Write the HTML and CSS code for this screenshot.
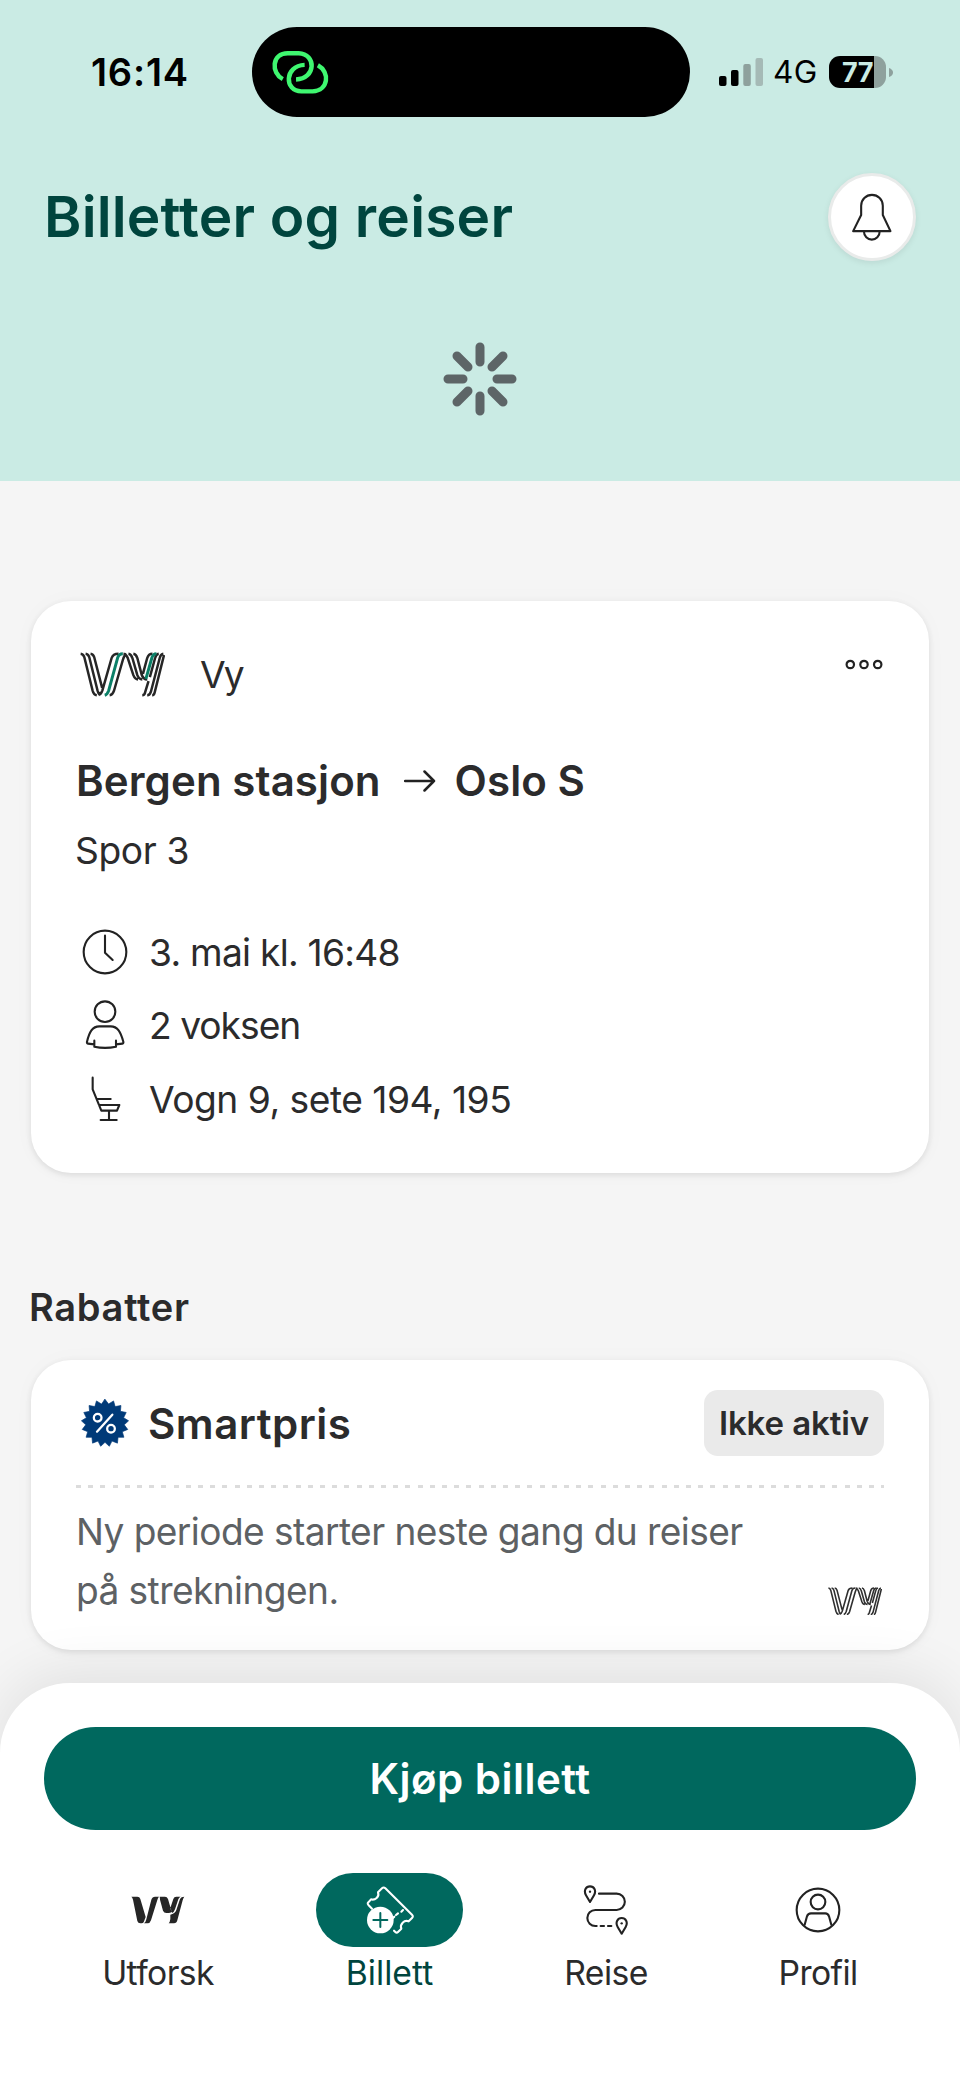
FILE: index.html
```html
<!DOCTYPE html>
<html lang="nb">
<head>
<meta charset="utf-8">
<title>Billetter og reiser</title>
<link rel="stylesheet" href="styles.css">
</head>
<body>
<div class="screen">
  <header class="header">
    <div class="status">
      <span class="time">16:14</span>
      <div class="island">
        <svg class="link-icon" viewBox="90 86 180 142"><path d="M128 177 C92 158 94 99 143 99 H176 C230 101 229 176 168 178"/><path d="M194 134 C132 136 132 214 184 214 H218 C267 212 271 155 234 135"/></svg>
      </div>
      <div class="indicators">
        <svg class="signal" viewBox="0 0 44 28"><rect x="0" y="18" width="7.5" height="10" rx="2"/><rect x="12" y="12" width="7.5" height="16" rx="2"/><rect x="24.3" y="6" width="7.5" height="22" rx="2" fill="#8ea19d"/><rect x="36.5" y="0" width="7.5" height="28" rx="2" fill="#a5bab6"/></svg>
        <span class="network">4G</span>
        <div class="battery">77</div>
        <svg class="battery-tip" viewBox="0 0 4 9"><path d="M0 0 Q4 1.5 4 4.5 Q4 7.5 0 9Z"/></svg>
      </div>
    </div>
    <div class="title-row">
      <h1 class="title">Billetter og reiser</h1>
      <button class="bell" aria-label="Varsler"><svg viewBox="484 486 124 150"><path d="M490.500 603.500 L514.500 555 V527 a32.500 32.500 0 0 1 65 0 V555 L602.500 603.500 Z M523 605 a23.500 24 0 0 0 47 0"/></svg></button>
    </div>
    <svg class="spinner" viewBox="-37 -37 74 74"><path d="M0 -17V-32 M0 17V32 M-17 0H-32 M17 0H32 M12 -12L23 -23 M12 12L23 23 M-12 12L-23 23 M-12 -12L-23 -23"/></svg>
  </header>

  <main class="content">
    <article class="card trip">
      <div class="operator">
        <svg class="vy-logo" viewBox="60 64 258 136">
          <g id="vy-lines"><path d="M62 69 Q70 70 73 79 L98 180 Q102 194 111 195 M77 69 Q85 70 88 79 L113 180 Q116 191 121 195 M92 69 Q100 70 103 79 L127 172 M117 193 Q124 192 128 180 L156 82 Q160 69 177 69 M150 195 Q159 194 163 182 L190 88 Q194 73 201 69 M192 69 Q200 70 205 82 L222 134 Q227 147 236 147 M207 69 Q215 70 219 82 L234 134 Q239 147 249 147 M222 69 Q230 70 234 82 L247 132 Q252 147 264 147 M251 130 L264 82 Q268 69 280 69 M299 69 Q291 70 288 82 L272 140 M268 152 L258 185 Q256 195 249 195 M313 69 Q305 70 302 82 L275 185 Q272 195 264 195 M315 73 L287 185 Q285 195 279 195"/></g>
          <path class="vy-green" d="M135 195 Q143 193 147 181 L174 82 Q178 69 190 69 M260 145 L278 82 Q282 69 292 69"/>
        </svg>
        <span class="operator-name">Vy</span>
        <svg class="more" viewBox="0 0 38 11"><circle cx="5.300" cy="5.500" r="3.700"/><circle cx="19" cy="5.500" r="3.700"/><circle cx="32.700" cy="5.500" r="3.700"/></svg>
      </div>
      <h2 class="route"><span>Bergen stasjon</span><svg class="arrow" viewBox="0 0 32 24"><path d="M1 12H30 M20.500 2.500 L30 12 L20.500 21.500"/></svg><span>Oslo S</span></h2>
      <p class="track">Spor 3</p>
      <ul class="details">
        <li><svg class="detail-icon" viewBox="60 52 150 150"><circle cx="135" cy="127" r="64"/><path d="M135 78 V129 L158 151"/></svg><span>3. mai kl. 16:48</span></li>
        <li><svg class="detail-icon" viewBox="60 272 150 150"><circle cx="135" cy="307" r="31"/><path d="M103 394 V412 Q135 419 168 412 V394 M103 405 L84 403 Q80 402 81 397 C88 368 97 351 118 351 H152 C173 351 182 368 190 397 Q191 402 187 403 L168 405"/></svg><span class="people">2 voksen</span></li>
        <li><svg class="detail-icon" viewBox="60 492 150 150"><path d="M98 503 V538 L124 602 H171 L178 585 H117 M112 567 H152 M147 602 V630 M122 630 H170"/></svg><span class="seats">Vogn 9, sete 194, 195</span></li>
      </ul>
    </article>

    <h3 class="section-title">Rabatter</h3>

    <article class="card discount">
      <div class="discount-head">
        <svg class="seal" viewBox="-75 -75 150 150"><polygon points="0,-71 10.700,-57 25.600,-66.200 30.500,-49.300 47.800,-52.500 46.300,-35 63.600,-31.600 55.800,-15.900 70.700,-6.600 57.700,5.400 68.300,19.400 51.900,25.900 56.700,42.800 39.100,42.900 37.400,60.400 20.900,54.100 13,69.800 0,58 -13,69.800 -20.900,54.100 -37.400,60.400 -39.100,42.900 -56.700,42.800 -51.900,25.900 -68.300,19.400 -57.700,5.400 -70.700,-6.600 -55.800,-15.900 -63.600,-31.600 -46.300,-35 -47.800,-52.500 -30.500,-49.300 -25.600,-66.200 -10.700,-57"/><g><circle cx="-22" cy="-16" r="11.500"/><circle cx="18" cy="17" r="11.500"/><path d="M-24 26 L22 -25"/></g></svg>
        <span class="discount-name">Smartpris</span>
        <span class="tag">Ikke aktiv</span>
      </div>
      <div class="divider"></div>
      <div class="discount-body">
        <p>Ny periode starter neste gang du reiser<br>på strekningen.</p>
        <svg class="vy-small" viewBox="60 64 258 136"><use href="#vy-lines"/><path d="M135 195 Q143 193 147 181 L174 82 Q178 69 190 69 M260 145 L278 82 Q282 69 292 69"/></svg>
      </div>
    </article>
  </main>

  <footer class="sheet">
    <button class="buy">Kjøp billett</button>
    <nav class="tabs">
      <a class="tab">
        <span class="tab-icon"><svg class="vy-solid" viewBox="154 108 162 84"><path d="M155 110 H173 Q180 110 182 117 L198 171 L192 187 Q190 190 186 190 H182 Q175 190 173 183 L160 119 Q158 112 155 110Z M193 190 Q198 187 200 178 L215 119 Q218 110 226 110 H238 Q235 113 233 120 L214 181 Q211 190 204 190Z M240 110 H256 Q262 110 265 117 L276 155 Q273 159 266 159 H260 Q253 159 250 152 L241 119 Q241 113 240 110Z M303 110 H290 Q283 110 281 117 L272 144 L277 159 Q283 157 286 148 L296 118 Q298 112 303 110Z M272 164 Q286 161 290 150 L301 117 Q304 110 314 110 Q311 113 309 121 L293 181 Q291 190 283 190 H267 Q271 186 272 177Z"/></svg></span>
        <span class="tab-label">Utforsk</span>
      </a>
      <a class="tab active">
        <span class="tab-icon"><svg viewBox="853 75 150 150"><path d="M940 212 L944 216 Q948 220 952 216 L962 206 Q958 196 966 188 Q974 180 984 184 L994 174 Q999 169 994 164 L914 85 Q909 80 904 85 L892 97 Q896 107 888 114 Q880 121 871 118 L863 127 Q859 131 864 136 L874 146"/><path d="M967 150 L962 155 M952 160 L946 165 M941 170 L936 175"/><circle cx="899" cy="180" r="40"/><path class="plus" d="M899 159 V201 M878 180 H920"/></svg></span>
        <span class="tab-label">Billett</span>
      </a>
      <a class="tab">
        <span class="tab-icon"><svg viewBox="123 75 150 150"><path d="M177 101 H230 A24.500 24.500 0 0 1 230 150 H166 A24 24 0 0 0 166 198 H170 M182 198 H192 M204 198 H214"/><path d="M150 126 L138 106 C130 92 138 79 150 79 C162 79 170 92 162 106Z M245 221 L233 201 C225 187 233 174 245 174 C257 174 265 187 257 201Z"/><circle class="dot" cx="150" cy="95" r="3.500"/><circle class="dot" cx="245" cy="190" r="3.500"/></svg></span>
        <span class="tab-label">Reise</span>
      </a>
      <a class="tab">
        <span class="tab-icon"><svg viewBox="760 75 150 150"><circle cx="835" cy="150" r="64"/><circle cx="835" cy="126" r="22"/><path d="M795 194 L802 169 Q805 160 814 160 H857 Q865 160 868 169 L875 194"/></svg></span>
        <span class="tab-label">Profil</span>
      </a>
    </nav>
  </footer>
</div>
</body>
</html>
```
FILE: styles.css
```css
* { box-sizing: border-box; }
body { margin: 0; background: #f4f4f4; font-family: Inter, "Liberation Sans", sans-serif; color: #2b2b2c; }
h1, h2, h3, p, ul { margin: 0; padding: 0; font-weight: 400; }
button { border: 0; padding: 0; font-family: inherit; }
svg { display: block; flex: none; fill: none; stroke: #222; stroke-width: 6.3; stroke-linecap: round; stroke-linejoin: round; }
.screen { width: 960px; height: 2081px; overflow: hidden; display: flex; flex-direction: column; background: #f5f5f5; }

.header { height: 481px; background: #caebe4; flex: none; }
.status { display: flex; align-items: center; height: 117px; padding: 27px 67px 0 91px; color: #000; }
.time { width: 161px; font-size: 38px; font-weight: 600; line-height: 46px; letter-spacing: .8px; }
.island { display: flex; align-items: center; width: 438px; height: 90px; border-radius: 45px; background: #000; padding-left: 18px; }
.link-icon { width: 60px; height: 47px; stroke: #3ff770; stroke-width: 13.5; stroke-linecap: butt; }
.indicators { display: flex; align-items: center; margin-left: 29px; }
.signal { width: 44px; height: 28px; fill: #000; stroke: none; }
.network { width: 54px; padding-left: 10px; margin-right: 12px; font-size: 31.5px; line-height: 40px; letter-spacing: .4px; }
.battery { display: flex; align-items: center; justify-content: center; width: 57px; height: 32px; border-radius: 11px; background: linear-gradient(to right, #000 45px, #8ea19d 45px); color: #caebe4; font-size: 27px; font-weight: 700; letter-spacing: -.5px; }
.battery-tip { width: 4px; height: 9px; margin-left: 3px; fill: #8ea19d; stroke: none; }
.title-row { display: flex; align-items: center; justify-content: space-between; height: 88px; margin-top: 56px; padding: 0 44px; }
.title { font-size: 56.8px; font-weight: 600; line-height: 70px; letter-spacing: .2px; color: #00453e; }
.bell { display: flex; align-items: center; justify-content: center; width: 88px; height: 88px; border: 3px solid #e9ebea; border-radius: 50%; background: #fff; box-shadow: 0 2px 6px rgba(0, 0, 0, .08); }
.bell svg { width: 41.3px; height: 50px; }
.spinner { width: 74px; height: 74px; margin: 81px auto 0; stroke: #5d6567; stroke-width: 9; }

.content { padding: 120px 31px 0 31px; flex: none; height: 1202px; }
.card { border-radius: 40px; background: #fff; box-shadow: 0 2px 6px rgba(0, 0, 0, .1), 0 0 24px rgba(0, 0, 0, .025); }
.trip { height: 572px; padding: 50px 45px 0; }
.operator { display: flex; align-items: center; height: 46px; padding-left: 4px; }
.vy-logo { width: 85px; height: 45px; stroke: #262626; stroke-width: 7.6; stroke-linecap: butt; }
.vy-green { stroke: #0b8068; stroke-width: 9; }
.operator-name { margin-left: 35px; padding-top: 2px; font-size: 37.2px; line-height: 46px; letter-spacing: -2px; }
.more { width: 38px; height: 11px; margin: -20px 1px 0 auto; stroke-width: 2.2; }
.route { display: flex; align-items: center; height: 50px; margin-top: 58px; font-size: 42px; font-weight: 600; letter-spacing: .1px; }
.arrow { width: 32px; height: 24px; margin: 2px 19px 0 23px; stroke-width: 2.5; }
.track { height: 46px; margin-top: 23px; font-size: 37.2px; line-height: 46px; letter-spacing: -.4px; margin-left: -1px; }
.details { display: flex; flex-direction: column; gap: 22.3px; margin-top: 53px; list-style: none; font-size: 37.2px; line-height: 50px; letter-spacing: -.75px; }
.details li { display: flex; gap: 19px; padding-left: 4px; }
.details span { padding-top: 1px; }
.details .people { letter-spacing: -1px; }
.details .seats { letter-spacing: -.5px; }
.detail-icon { width: 50px; height: 50px; }

.section-title { margin-top: 109px; font-size: 38px; font-weight: 600; line-height: 50px; letter-spacing: .7px; margin-left: -2px; }
.discount { height: 290px; margin-top: 28px; padding: 30px 45px 0; }
.discount-head { display: flex; align-items: center; height: 66px; }
.seal { width: 50px; height: 50px; margin-left: 4px; fill: #003a78; stroke: #003a78; stroke-width: 2; }
.seal g { fill: none; stroke: #fff; stroke-width: 6.8; }
.discount-name { margin-left: 18px; font-size: 42px; font-weight: 600; letter-spacing: .5px; }
.tag { width: 180px; height: 66px; margin-left: auto; border-radius: 14px; background: #eaeaea; font-size: 33px; font-weight: 600; line-height: 66px; text-align: center; letter-spacing: -.1px; }
.divider { height: 3px; margin-top: 29px; background: repeating-linear-gradient(to right, #dcdcdc 0 5px, transparent 5px 12.2px); }
.discount-body { display: flex; align-items: flex-end; justify-content: space-between; margin-top: 15px; }
.discount-body p { font-size: 37.1px; line-height: 58.5px; letter-spacing: -.57px; color: #5d6164; }
.vy-small { width: 54px; height: 28.5px; margin: 0 2px 5px 0; stroke: #303030; stroke-width: 7.6; stroke-linecap: butt; }

.sheet { position: relative; flex: 1; padding: 44px 44px 0; border-radius: 70px 70px 0 0; background: #fff; box-shadow: 0 -8px 60px rgba(0, 0, 0, .09); }
.buy { display: block; width: 872px; height: 103px; border-radius: 52px; background: #00685e; color: #fff; font-size: 42px; font-weight: 600; letter-spacing: .5px; }
.tabs { display: grid; grid-template-columns: 232px 231px 202px 222px; margin: 43px 0 0 -2px; }
.tab { display: flex; flex-direction: column; align-items: center; }
.tab-icon { display: flex; align-items: center; justify-content: center; width: 147px; height: 74px; border-radius: 37px; }
.tab-icon svg { width: 50px; height: 50px; }
.tab-icon .vy-solid { width: 54px; height: 28px; fill: #262626; stroke: none; }
.tab-label { font-size: 33.7px; line-height: 51px; letter-spacing: -.6px; }
.active .tab-icon { background: #00685e; }
.active svg { stroke: #fff; }
.active circle { fill: #fff; stroke: none; }
.active .plus { stroke: #00685e; stroke-width: 6; }
.active .tab-label { color: #00453e; letter-spacing: 0; }
.dot { fill: #222; stroke: none; }
```
